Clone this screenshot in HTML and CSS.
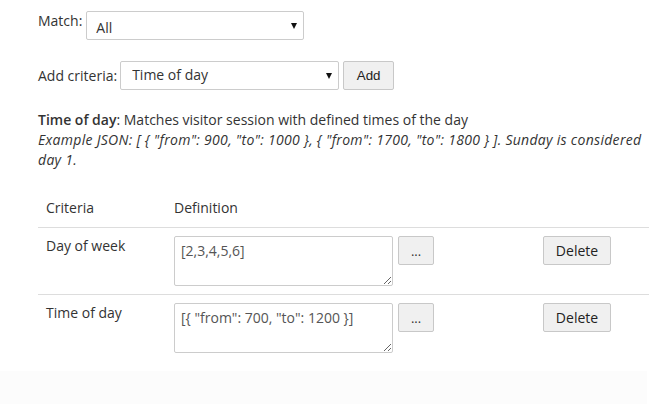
FILE: index.html
```html
<!DOCTYPE html>
<html>
<head>
<meta charset="utf-8">
<link rel="stylesheet" href="styles.css">
</head>
<body>
<div class="page">
  <div class="content">
    <div class="form-row row-match">
      <label class="lbl">Match:</label>
      <span class="sel-wrap sel-match">
        <select class="sel sel-1"><option>All</option></select>
      </span>
    </div>
    <div class="form-row row-add">
      <label class="lbl lbl-add">Add criteria:</label>
      <span class="sel-wrap sel-add">
        <select class="sel sel-2"><option>Time of day</option></select>
      </span>
      <button class="btn btn-add">Add</button>
    </div>
    <div class="desc">
      <div><strong>Time of day</strong>: Matches visitor session with defined times of the day</div>
      <div class="example">Example JSON: [ { "from": 900, "to": 1000 }, { "from": 1700, "to": 1800 } ]. Sunday is considered day 1.</div>
    </div>
    <table class="crit">
      <thead>
        <tr><th class="c1">Criteria</th><th class="c2">Definition</th><th class="c3"></th></tr>
      </thead>
      <tbody>
        <tr class="r1">
          <td>Day of week</td>
          <td><div class="def"><textarea class="ta">[2,3,4,5,6]</textarea><button class="btn btn-dots">...</button></div></td>
          <td><button class="btn btn-del">Delete</button></td>
        </tr>
        <tr>
          <td>Time of day</td>
          <td><div class="def"><textarea class="ta">[{ "from": 700, "to": 1200 }]</textarea><button class="btn btn-dots">...</button></div></td>
          <td><button class="btn btn-del">Delete</button></td>
        </tr>
      </tbody>
    </table>
  </div>
  <div class="footer"></div>
</div>
</body>
</html>
```

FILE: styles.css
```css
html, body {
  margin: 0;
  padding: 0;
  background: #fff;
}
body {
  font-family: "Open Sans", "Liberation Sans", sans-serif;
  font-size: 14px;
  line-height: 20px;
  color: #333;
}
.page {
  width: 659px;
  height: 404px;
  display: flex;
  flex-direction: column;
  overflow: hidden;
}
.content {
  width: 611px;
  padding: 11px 0 10px 38px;
}
.form-row {
  display: flex;
  align-items: flex-start;
  gap: 4px;
}
.row-add {
  margin-top: 21px;
}
.lbl {
  display: block;
}
.lbl-add {
  margin-top: 5px;
  margin-right: -1px;
}
.sel-wrap {
  position: relative;
  display: block;
}
.sel-wrap::after {
  content: "";
  position: absolute;
  right: 7px;
  top: 12px;
  border-left: 3.5px solid transparent;
  border-right: 3.5px solid transparent;
  border-top: 6px solid #111;
  pointer-events: none;
}
.sel {
  -webkit-appearance: none;
  appearance: none;
  display: block;
  box-sizing: border-box;
  height: 29px;
  border: 1px solid #ccc;
  border-radius: 2px;
  background: #fff;
  font-family: "Open Sans", sans-serif;
  font-size: 14px;
  line-height: 20px;
  color: #333;
  margin: 0;
}
.sel-1 {
  width: 218px;
  padding: 6px 20px 1px 9px;
}
.sel-2 {
  width: 219px;
  padding: 3px 20px 4px 11px;
}
.btn {
  box-sizing: border-box;
  height: 29px;
  background: #f0f0f0;
  border: 1px solid #c8c8c8;
  border-radius: 2px;
  color: #222;
  margin: 0;
  padding: 0;
}
.btn-add {
  width: 51px;
  font-family: "Liberation Sans", Arial, sans-serif;
  font-size: 13.33px;
}
.desc {
  margin-top: 20px;
}
.desc strong {
  font-weight: 600;
}
.example {
  font-style: italic;
  letter-spacing: 0.3px;
  width: 625px;
}
.crit {
  margin-top: 20px;
  width: 611px;
  border-collapse: collapse;
  table-layout: fixed;
}
.crit th,
.crit td {
  padding: 8px;
  text-align: left;
  vertical-align: top;
  font-weight: normal;
}
.crit thead th {
  padding-bottom: 9px;
  border-bottom: 1px solid #ddd;
}
.crit tbody tr.r1 td {
  border-bottom: 1px solid #ddd;
}
.c1 { width: 112px; }
.c2 { width: 353px; }
.def {
  display: flex;
  align-items: flex-start;
  gap: 5px;
}
.ta {
  box-sizing: border-box;
  width: 219px;
  height: 50px;
  margin: 0;
  border: 1px solid #ccc;
  border-radius: 2px;
  padding: 4px 6px;
  font-family: "Open Sans", sans-serif;
  font-size: 14px;
  line-height: 20px;
  color: #555;
  display: block;
}
.btn-dots {
  width: 36px;
  font-family: "Open Sans", sans-serif;
  font-size: 13px;
  color: #333;
}
.btn-del {
  width: 68px;
  font-family: "Open Sans", sans-serif;
  font-size: 14px;
  color: #222;
}
.footer {
  flex: 1;
  width: 647px;
  background: #fcfcfc;
}
```
